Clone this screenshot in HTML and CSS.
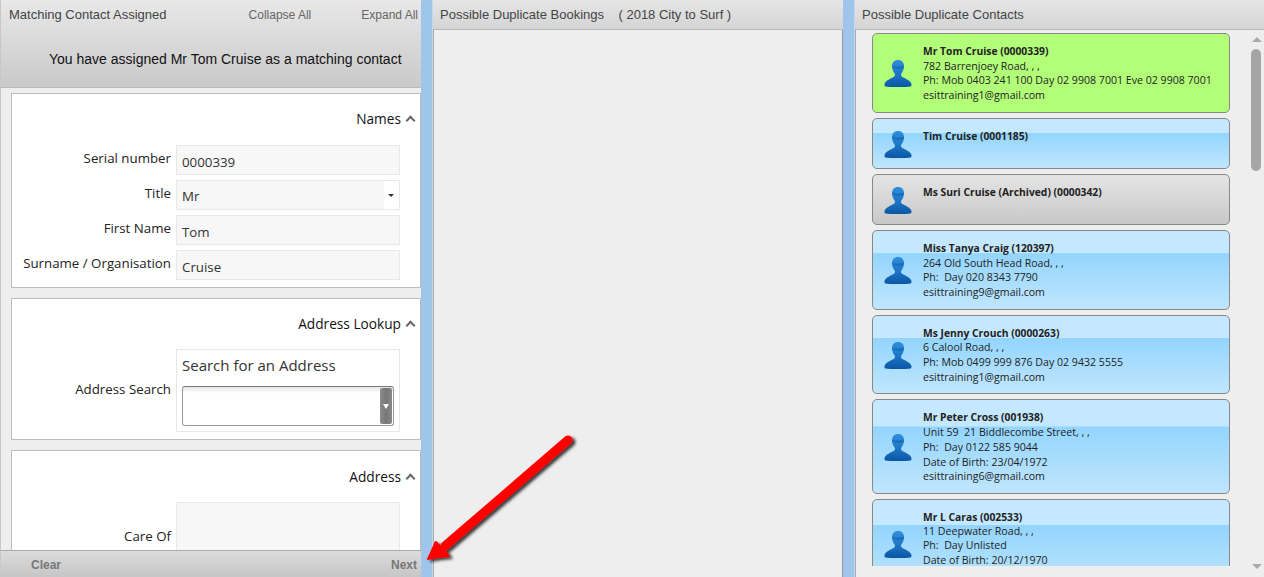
FILE: index.html

```html
<!DOCTYPE html>
<html lang="en">
<head>
  <meta charset="UTF-8">
  <title>Possible Duplicates</title>
  <meta name="viewport" content="width=device-width, initial-scale=1.0">
  <link rel="stylesheet" href="styles.css">
</head>
<body>
  <svg width="0" height="0" class="defs">
    <defs>
      <linearGradient id="personFill" x1="0" y1="0" x2="0" y2="1">
        <stop offset="0" stop-color="#2f8fdc"/>
        <stop offset="0.55" stop-color="#1c74c4"/>
        <stop offset="1" stop-color="#0a56a4"/>
      </linearGradient>
      <symbol id="person" viewBox="0 0 28 27">
        <path fill="url(#personFill)" d="M14 0c-4 0-6 2.600-6 6.200 0 3 1.200 5.400 2.600 7.200.5.700.5 2-.1 2.800C8.800 18 2.600 19.500.8 23.200.2 24.600.4 26 1.400 26.500c2.500.5 7 .5 12.600.5s10.100 0 12.600-.5c1-.5 1.200-1.900.6-3.300-1.800-3.700-8-5.200-9.700-7-.6-.8-.6-2.100-.1-2.800C18.800 11.600 20 9.200 20 6.200 20 2.600 18 0 14 0z"/>
        <path fill="#0d5ea9" opacity=".55" d="M8.300 5.500c3.200 1.700 8.300 1.500 11.500-.3l.2 2c-1.200 1.400-2.700 1.900-4.500 1.700-2.300-.2-4.600-.6-7.100-1.400z"/>
      </symbol>
    </defs>
  </svg>

  <div class="layout">
    <div class="panel panel-left">
      <div class="head head-tall">
        <div class="head-row">
          <span class="head-title">Matching Contact Assigned</span>
          <span class="head-links"><a>Collapse All</a><a>Expand All</a></span>
        </div>
        <div class="assigned">You have assigned Mr Tom Cruise as a matching contact</div>
      </div>

      <div class="form-scroll">
        <section class="group group-names">
          <div class="group-title">Names <span class="chev"></span></div>
          <div class="row"><label>Serial number</label><div class="field">0000339</div></div>
          <div class="row"><label>Title</label><div class="field field-select">Mr<span class="select-btn"><i></i></span></div></div>
          <div class="row"><label>First Name</label><div class="field">Tom</div></div>
          <div class="row"><label>Surname / Organisation</label><div class="field">Cruise</div></div>
        </section>

        <section class="group group-lookup">
          <div class="group-title">Address Lookup <span class="chev"></span></div>
          <div class="row row-lookup">
            <label>Address Search</label>
            <div class="lookup">
              <div class="lookup-text">Search for an Address</div>
              <div class="combo"><span class="combo-btn"><i></i></span></div>
            </div>
          </div>
        </section>

        <section class="group group-address">
          <div class="group-title">Address <span class="chev"></span></div>
          <div class="row row-care">
            <label>Care Of</label>
            <div class="field field-tall"></div>
          </div>
        </section>
      </div>

      <div class="foot"><a>Clear</a><a>Next</a></div>
    </div>

    <div class="splitter"></div>

    <div class="panel panel-mid">
      <div class="head"><span class="head-title">Possible Duplicate Bookings &nbsp;&nbsp; ( 2018 City to Surf )</span></div>
      <div class="mid-body"></div>
    </div>

    <div class="splitter"></div>

    <div class="panel panel-right">
      <div class="head"><span class="head-title">Possible Duplicate Contacts</span></div>
      <div class="contacts-wrap">
        <div class="contacts">
          <div class="contact contact-match">
            <svg class="person"><use href="#person"/></svg>
            <div class="info"><b>Mr Tom Cruise (0000339)</b><br>782 Barrenjoey Road, , ,<br>Ph: Mob 0403 241 100 Day 02 9908 7001 Eve 02 9908 7001<br>esittraining1@gmail.com</div>
          </div>
          <div class="contact contact-short">
            <svg class="person"><use href="#person"/></svg>
            <div class="info"><b>Tim Cruise (0001185)</b></div>
          </div>
          <div class="contact contact-short contact-archived">
            <svg class="person"><use href="#person"/></svg>
            <div class="info"><b>Ms Suri Cruise (Archived) (0000342)</b></div>
          </div>
          <div class="contact">
            <svg class="person"><use href="#person"/></svg>
            <div class="info"><b>Miss Tanya Craig (120397)</b><br>264 Old South Head Road, , ,<br>Ph:&nbsp; Day 020 8343 7790<br>esittraining9@gmail.com</div>
          </div>
          <div class="contact">
            <svg class="person"><use href="#person"/></svg>
            <div class="info"><b>Ms Jenny Crouch (0000263)</b><br>6 Calool Road, , ,<br>Ph: Mob 0499 999 876 Day 02 9432 5555<br>esittraining1@gmail.com</div>
          </div>
          <div class="contact">
            <svg class="person"><use href="#person"/></svg>
            <div class="info"><b>Mr Peter Cross (001938)</b><br>Unit 59&nbsp; 21 Biddlecombe Street, , ,<br>Ph:&nbsp; Day 0122 585 9044<br>Date of Birth: 23/04/1972<br>esittraining6@gmail.com</div>
          </div>
          <div class="contact contact-cut">
            <svg class="person"><use href="#person"/></svg>
            <div class="info"><b>Mr L Caras (002533)</b><br>11 Deepwater Road, , ,<br>Ph:&nbsp; Day Unlisted<br>Date of Birth: 20/12/1970</div>
          </div>
        </div>
        <div class="scrollbar">
          <span class="arrow-up"></span>
          <span class="thumb"></span>
          <span class="arrow-down"></span>
        </div>
      </div>
    </div>
  </div>

  <!-- red annotation arrow drawn over the screenshot -->
  <svg class="callout" width="170" height="152" viewBox="0 0 170 152">
    <defs>
      <filter id="calloutShadow" x="-20%" y="-20%" width="140%" height="140%">
        <feDropShadow dx="3" dy="2" stdDeviation="1.500" flood-color="#000" flood-opacity=".75"/>
      </filter>
    </defs>
    <g filter="url(#calloutShadow)">
      <path d="M153 15 L30 121" stroke="#ff0000" stroke-width="9" stroke-linecap="round" fill="none"/>
      <path d="M13 134 L21 117 L33 130 Z" fill="#ff0000" stroke="#ff0000" stroke-width="2" stroke-linejoin="round"/>
      <path d="M13 134 L20 116 L35 132 Z" fill="#ff0000"/>
    </g>
  </svg>
</body>
</html>
```

FILE: styles.css

```css
html, body { margin: 0; height: 100%; overflow: hidden; }
body { font-family: "Open Sans", "Noto Sans", sans-serif; background: #eee; color: #222; position: relative; }
.defs { position: absolute; }

.layout { display: flex; height: 577px; }
.panel { display: flex; flex-direction: column; height: 577px; overflow: hidden; }
.panel-left { width: 421px; }
.panel-mid { width: 410px; }
.panel-right { width: 409px; }
.splitter { width: 12px; background: #9fc5ea; border-right: 1px solid #c4d9ee; box-sizing: border-box; flex: none; }

.head { height: 30px; box-sizing: border-box; flex: none; padding: 7px 0 0 7px; font: 13px/16px "Liberation Sans", Arial, sans-serif; background: linear-gradient(#e6e6e6, #d4d4d4); border-bottom: 1px solid #b9b9b9; }
.head-title { color: #444; }
.head-tall { height: 88px; padding: 7px 3px 0 8px; background: linear-gradient(#e8e8e8, #c9c9c9); border-left: 1px solid #c8c8c8; }
.head-row { display: flex; justify-content: space-between; }
.head-links { font-size: 12px; }
.head-links a { color: #666; margin-left: 50px; }
.assigned { font-size: 14px; line-height: 18px; color: #111; margin: 27px 0 0 40px; }

.form-scroll { flex: 1; min-height: 0; overflow: hidden; padding: 5px 0 0 10px; border-left: 1px solid #c8c8c8; box-sizing: border-box; }
.group { background: #fff; border: 1px solid #bbb; box-sizing: border-box; margin-bottom: 10px; padding: 16px 6px 0 0; }
.group-names { height: 195px; }
.group-lookup { height: 142px; }
.group-address { height: 200px; padding-top: 17px; }
.group-title { display: flex; justify-content: flex-end; align-items: center; gap: 3px; font-size: 13.700px; line-height: 18px; color: #111; height: 18px; margin-bottom: 17px; }
.chev { width: 5px; height: 5px; border-left: 2px solid #666; border-top: 2px solid #666; transform: rotate(45deg); margin: 2px 0 0 3px; }

.row { display: flex; gap: 5px; margin: 0 14px 5px 0; align-items: flex-start; font-size: 13.300px; }
.row label { width: 159px; flex: none; text-align: right; color: #222; line-height: 18px; padding-top: 4px; white-space: nowrap; }
.field { width: 225px; height: 30px; box-sizing: border-box; background: #f7f7f7; border: 1px solid #e8e8e8; padding: 6px 0 0 5px; line-height: 20px; color: #333; position: relative; }
.field-select { padding-top: 5px; background: linear-gradient(90deg, #f7f7f7 207px, #fff 207px); }
.select-btn { position: absolute; right: 0; top: 0; width: 16px; height: 28px; display: flex; align-items: center; justify-content: center; }
.select-btn i { border: 3px solid transparent; border-top: 3px solid #333; border-bottom: 0; }

.row-lookup { align-items: center; height: 83px; margin-top: -1px; }
.row-lookup label { padding: 0 0 4px; }
.lookup { width: 225px; height: 83px; box-sizing: border-box; border: 1px solid #e8e8e8; padding: 4px 5px 0; }
.lookup-text { font-size: 15px; line-height: 22px; color: #333; margin-bottom: 10px; }
.combo { height: 40px; box-sizing: border-box; border: 1px solid #999; border-top-color: #777; border-radius: 3px; background: linear-gradient(#e4e4e4, #fff 6px); position: relative; }
.combo-btn { position: absolute; right: 1px; top: 1px; bottom: 1px; width: 12px; border-radius: 2px; background: linear-gradient(90deg, #8d8d8d, #777 50%, #888); display: flex; align-items: center; justify-content: center; }
.combo-btn i { border: 3.500px solid transparent; border-top: 5px solid #fff; border-bottom: 0; }

.row-care { align-items: flex-start; margin-top: 7px; }
.row-care label { padding-top: 25px; }
.group-address .group-title { margin-bottom: 16px; }
.field-tall { height: 120px; }

.foot { height: 27px; flex: none; box-sizing: border-box; display: flex; justify-content: space-between; padding: 6px 4px 0 30px; font: bold 12px/16px "Liberation Sans", Arial, sans-serif; color: #777; background: linear-gradient(#dcdcdc, #c6c6c6); border-top: 1px solid #aaa; border-left: 1px solid #c8c8c8; }

.mid-body { flex: 1; background: #eee; border-left: 1px solid #aaa; border-right: 1px solid #999; }

.contacts-wrap { flex: 1; min-height: 0; display: flex; border-left: 1px solid #aaa; }
.contacts { width: 358px; height: 533px; margin: 3px 0 0 16px; overflow: hidden; flex: none; }
.contact { display: flex; box-sizing: border-box; width: 358px; margin-bottom: 5px; padding: 10px 4px 9px 11px; border: 1px solid #888; border-radius: 5px; font: 10.600px/14.700px "Open Sans", "Noto Sans", sans-serif; color: #222; background: linear-gradient(#c4e8ff 0, #c4e8ff 28%, #93d5fe 29%, #c0e6fd 100%); }
.contact b { font-weight: 700; font-size: 10.300px; color: #222; }
.contact-match { background: #b3fe79; }
.contact-short { height: 51px; }
.contact-archived { background: linear-gradient(#e4e4e4, #c8c8c8); }
.contact-cut { height: 90px; line-height: 14.200px; }
.person { width: 28px; height: 27px; flex: none; align-self: center; margin-right: 11px; }
.contact-short .person { margin-top: 2px; }
.info { white-space: nowrap; }

.scrollbar { flex: 1; position: relative; }
.arrow-up { position: absolute; left: 22px; top: 7px; border: 5px solid transparent; border-bottom: 5px solid #aaa; border-top: 0; }
.arrow-down { position: absolute; left: 22px; top: 534px; border: 5px solid transparent; border-top: 5px solid #aaa; border-bottom: 0; }
.thumb { position: absolute; left: 21px; top: 19px; width: 10px; height: 122px; background: #a6a6a6; border-radius: 5px; }

.callout { position: absolute; left: 415px; top: 425px; }
```
